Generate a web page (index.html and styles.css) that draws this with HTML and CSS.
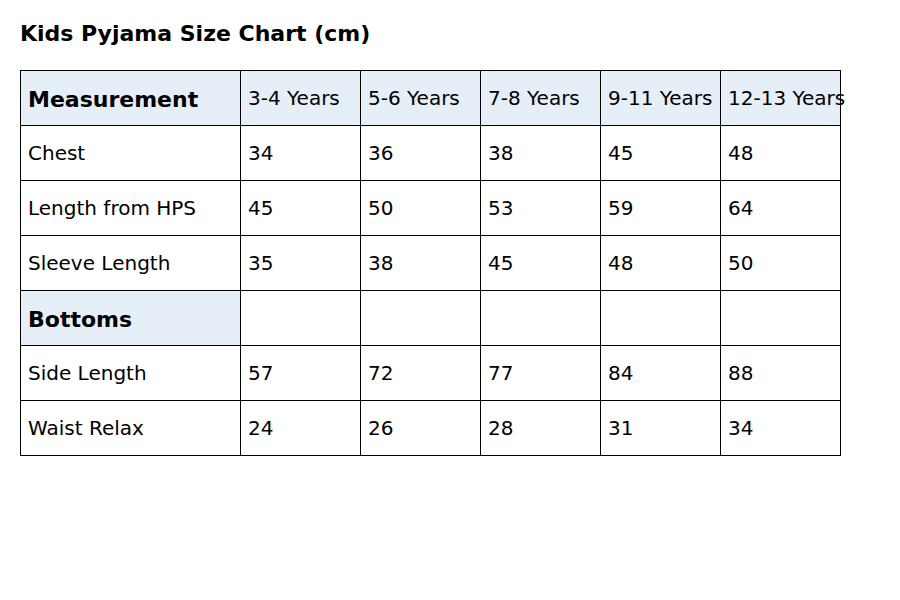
FILE: index.html
```html
<!DOCTYPE html>
<html>
<head>
<meta charset="utf-8">
<link rel="stylesheet" href="styles.css">
</head>
<body>
<h1 class="title">Kids Pyjama Size Chart (cm)</h1>
<div class="chart">
  <div class="cell head label">Measurement</div>
  <div class="cell head">3-4 Years</div>
  <div class="cell head">5-6 Years</div>
  <div class="cell head">7-8 Years</div>
  <div class="cell head">9-11 Years</div>
  <div class="cell head">12-13 Years</div>

  <div class="cell">Chest</div>
  <div class="cell">34</div><div class="cell">36</div><div class="cell">38</div><div class="cell">45</div><div class="cell">48</div>

  <div class="cell">Length from HPS</div>
  <div class="cell">45</div><div class="cell">50</div><div class="cell">53</div><div class="cell">59</div><div class="cell">64</div>

  <div class="cell">Sleeve Length</div>
  <div class="cell">35</div><div class="cell">38</div><div class="cell">45</div><div class="cell">48</div><div class="cell">50</div>

  <div class="cell head label">Bottoms</div>
  <div class="cell"></div><div class="cell"></div><div class="cell"></div><div class="cell"></div><div class="cell"></div>

  <div class="cell">Side Length</div>
  <div class="cell">57</div><div class="cell">72</div><div class="cell">77</div><div class="cell">84</div><div class="cell">88</div>

  <div class="cell">Waist Relax</div>
  <div class="cell">24</div><div class="cell">26</div><div class="cell">28</div><div class="cell">31</div><div class="cell">34</div>
</div>
</body>
</html>
```
FILE: styles.css
```css
html, body {
  margin: 0;
  padding: 0;
  background: #ffffff;
}
body {
  font-family: "DejaVu Sans", sans-serif;
  color: #000000;
  padding: 20px;
}
.title {
  margin: 0;
  font-size: 22px;
  font-weight: bold;
  line-height: 28px;
}
.chart {
  margin-top: 22px;
  display: grid;
  grid-template-columns: 220px repeat(5, 120px);
  grid-auto-rows: 55px;
  width: 820px;
  border-right: 1px solid #000;
  border-bottom: 1px solid #000;
}
.cell {
  box-sizing: border-box;
  border-left: 1px solid #000;
  border-top: 1px solid #000;
  padding-left: 7px;
  display: flex;
  align-items: center;
  font-size: 20px;
  white-space: nowrap;
  overflow: visible;
}
.head {
  background: #e6eef8;
}
.label {
  font-weight: bold;
  font-size: 22px;
  padding-top: 2px;
}
```
